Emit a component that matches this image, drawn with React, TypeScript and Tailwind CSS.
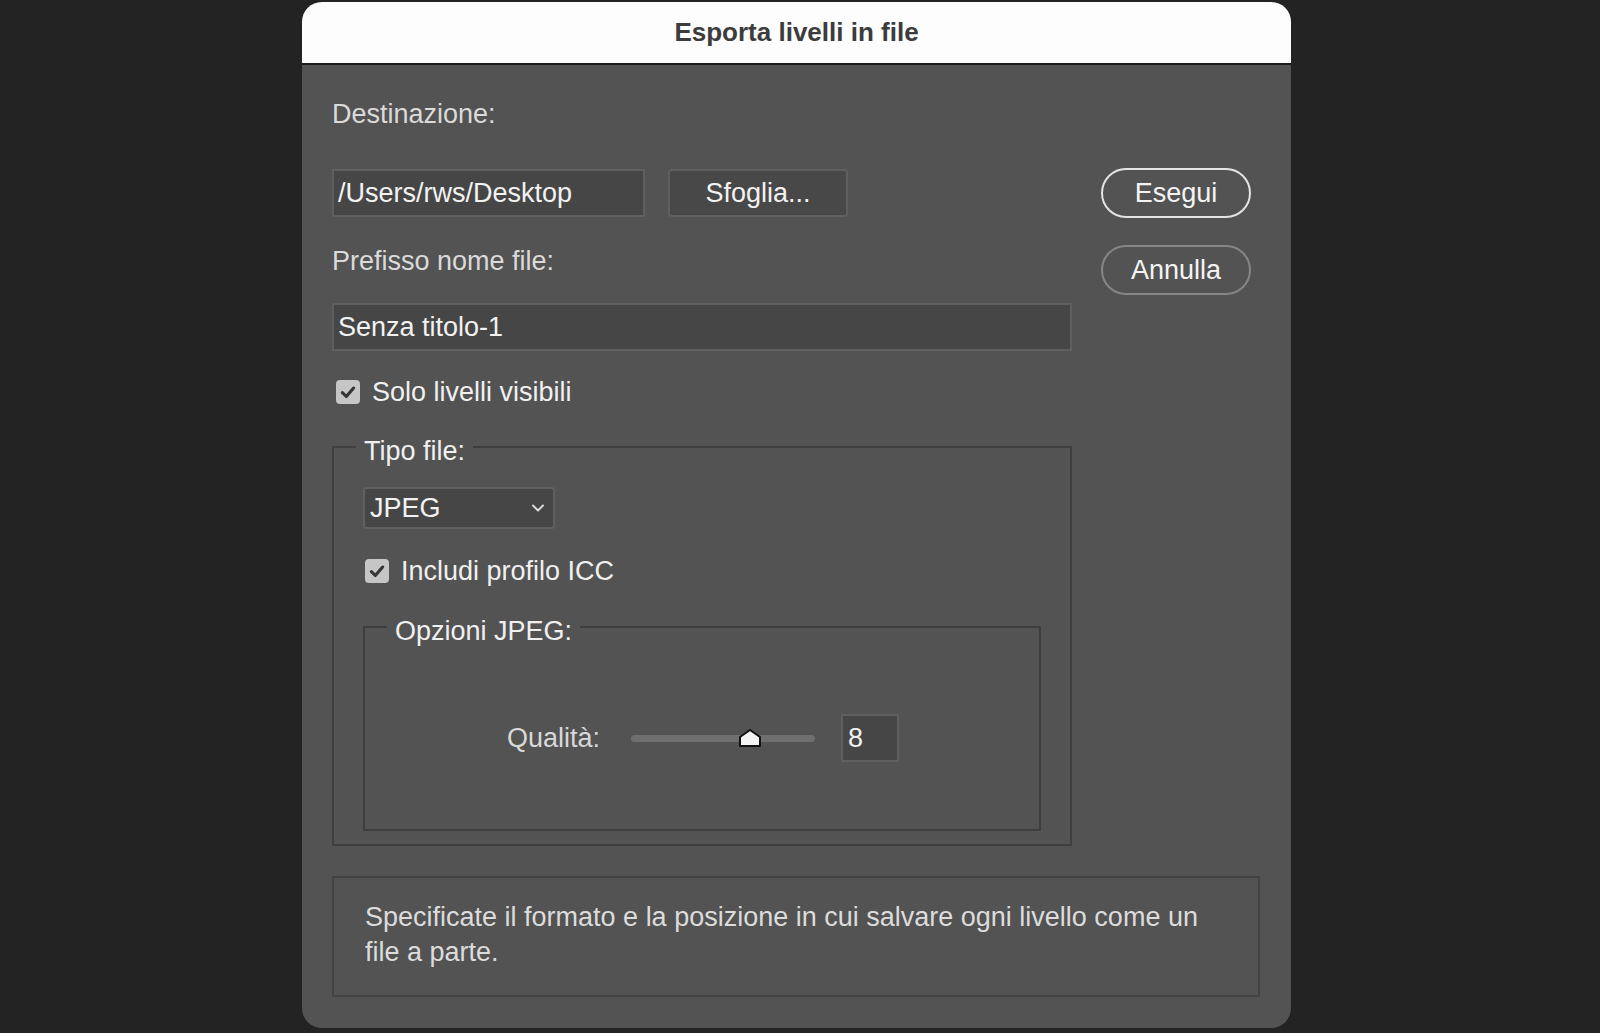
import { ChevronDown } from "lucide-react";

const font = { fontFamily: '"Liberation Sans", Arial, sans-serif' };

const CheckBox = () => (
  <span className="flex h-[24px] w-[24px] items-center justify-center rounded-[4px] bg-[#c6c6c6]">
    <svg width="18" height="18" viewBox="0 0 16 16" fill="none">
      <path d="M3 8.5 L6.5 12 L13 4.5" stroke="#363636" strokeWidth="2.8" strokeLinecap="round" strokeLinejoin="round" />
    </svg>
  </span>
);

const SliderThumb = () => (
  <svg width="24" height="20" viewBox="0 0 24 20" className="absolute left-[107px] top-[-7px]">
    <path d="M2 9 L12 2 L22 9 L22 18 L2 18 Z" fill="#f4f4f4" stroke="#111" strokeWidth="2" strokeLinejoin="round" />
  </svg>
);

export default function App() {
  return (
    <div className="min-h-screen w-full bg-[#232323] pt-[2px]" style={font}>
      <div className="ml-[302px] flex h-[1026px] w-[989px] flex-col overflow-hidden rounded-[20px] bg-[#535353]">

        {/* TITLE BAR */}
        <div className="flex h-[63px] shrink-0 items-center justify-center border-b-2 border-[#1c1c1c] bg-[#fdfdfd]">
          <span className="text-[26px] font-bold text-[#3c3c3c]">Esporta livelli in file</span>
        </div>

        {/* BODY */}
        <div className="flex pl-[30px] pt-[34px]">
          {/* LEFT */}
          <div className="flex w-[740px] flex-col">
            <div className="h-[30px] text-[27px] leading-[30px] text-[#dadada]">Destinazione:</div>

            <div className="mt-[40px] flex gap-[23px]">
              <div className="flex h-[48px] w-[313px] items-center border-2 border-[#5f5f5f] bg-[#464646] px-[4px] text-[27px] text-[#f2f2f2]">
                /Users/rws/Desktop
              </div>
              <div className="flex h-[48px] w-[180px] items-center justify-center rounded-[4px] border-2 border-[#5f5f5f] bg-[#484848] text-[27px] text-[#f2f2f2]">
                Sfoglia...
              </div>
            </div>

            <div className="mt-[29px] h-[30px] text-[27px] leading-[30px] text-[#dadada]">Prefisso nome file:</div>

            <div className="mt-[27px] flex h-[48px] w-[740px] items-center border-2 border-[#5f5f5f] bg-[#464646] px-[4px] text-[27px] text-[#f2f2f2]">
              Senza titolo-1
            </div>

            <div className="mt-[26px] flex h-[30px] items-center gap-[12px] pl-[4px]">
              <CheckBox />
              <span className="text-[27px] text-[#f0f0f0]">Solo livelli visibili</span>
            </div>

            {/* TIPO FILE */}
            <fieldset className="mt-[21px] w-[740px] border-2 border-[#3e3e3e] px-[29px] pb-[13px]">
              <legend className="ml-[-7px] px-[8px] pt-[8px] text-[27px] leading-[30px] text-[#f0f0f0]">Tipo file:</legend>

              <div className="mt-[21px] flex h-[42px] w-[192px] items-center justify-between rounded-[3px] border-2 border-[#5f5f5f] bg-[#464646] pl-[5px] pr-[5px] text-[27px] text-[#f2f2f2]">
                <span>JPEG</span>
                <ChevronDown size={20} strokeWidth={2.2} className="text-[#e0e0e0]" />
              </div>

              <div className="mt-[27px] flex h-[30px] items-center gap-[12px] pl-[2px]">
                <CheckBox />
                <span className="text-[27px] text-[#f0f0f0]">Includi profilo ICC</span>
              </div>

              {/* OPZIONI JPEG */}
              <fieldset className="mt-[22px] h-[223px] w-[678px] border-2 border-[#3e3e3e] px-[22px]">
                <legend className="ml-[0px] px-[8px] pt-[8px] text-[27px] leading-[30px] text-[#f0f0f0]">Opzioni JPEG:</legend>

                <div className="mt-[68px] flex h-[48px] items-center pl-[120px]">
                  <span className="text-[27px] text-[#d8d8d8]">Qualità:</span>
                  <div className="relative ml-[31px] h-[7px] w-[184px] rounded-full bg-[#6f6f6f]">
                    <SliderThumb />
                  </div>
                  <div className="ml-[26px] flex h-[48px] w-[58px] items-center border-2 border-[#5f5f5f] bg-[#464646] pl-[5px] text-[27px] text-[#f2f2f2]">
                    8
                  </div>
                </div>
              </fieldset>
            </fieldset>
          </div>

          {/* RIGHT BUTTONS */}
          <div className="ml-[29px] flex w-[150px] flex-col pt-[69px]">
            <div className="flex h-[50px] items-center justify-center rounded-full border-2 border-[#e4e4e4] text-[27px] text-[#f4f4f4]">
              Esegui
            </div>
            <div className="mt-[27px] flex h-[50px] items-center justify-center rounded-full border-2 border-[#868686] text-[27px] text-[#f4f4f4]">
              Annulla
            </div>
          </div>
        </div>

        {/* DESCRIPTION */}
        <div className="ml-[30px] mt-[30px] h-[121px] w-[928px] border-2 border-[#444444] pl-[31px] pr-[24px] pt-[22px] text-[27px] leading-[35px] text-[#dcdcdc]">
          Specificate il formato e la posizione in cui salvare ogni livello come un file a parte.
        </div>
      </div>
    </div>
  );
}
